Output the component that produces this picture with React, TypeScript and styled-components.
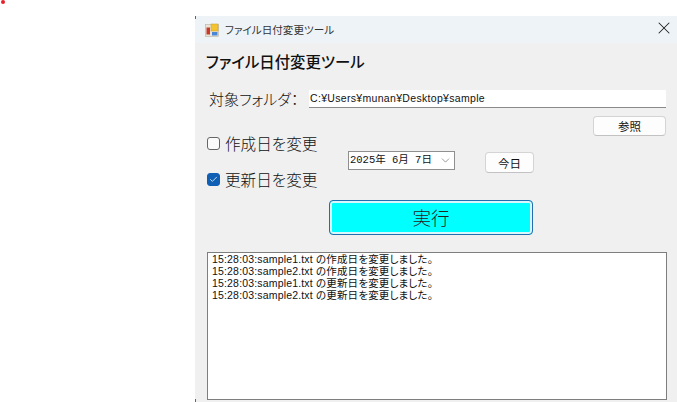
import React from "react";
import styled, { createGlobalStyle } from "styled-components";
import { X, ChevronDown, Check } from "lucide-react";

const GlobalStyle = createGlobalStyle`
  html, body {
    margin: 0;
    padding: 0;
    background: #ffffff;
  }
  body {
    font-family: "Liberation Sans", "Noto Sans CJK JP", sans-serif;
    font-feature-settings: "palt";
    color: #111;
  }
`;

const Page = styled.div`
  position: relative;
  width: 677px;
  height: 402px;
  overflow: hidden;
  padding: 16px 0 0 195px;
  box-sizing: border-box;
`;

const RedDot = styled.div`
  position: absolute;
  left: 1px;
  top: 0;
  width: 4px;
  height: 4px;
  border-radius: 50%;
  background: #e5202a;
`;

const EdgeTick = styled.div<{ $bottom?: boolean }>`
  position: absolute;
  left: 195px;
  ${(p) => (p.$bottom ? "bottom: 0;" : "top: 16px;")}
  width: 1px;
  height: 3px;
  background: #666;
`;

const Window = styled.div`
  display: flex;
  flex-direction: column;
  height: 386px;
  background: #f0f0f0;
`;

const TitleBar = styled.div`
  display: flex;
  align-items: center;
  flex-shrink: 0;
  height: 27px;
  padding: 0 3px 0 10px;
  background: #eef3f7;
  font-family: "Noto Sans CJK JP", sans-serif;
  font-size: 10.6px;
  color: #333;
`;

const AppIcon = styled.svg`
  width: 14px;
  height: 14px;
  margin-right: 6px;
`;

const TitleText = styled.span`
  flex: 1;
`;

const CloseIcon = styled(X)`
  width: 20px;
  height: 20px;
  margin-top: -3px;
  color: #222;
  stroke-width: 1.25;
`;

const Content = styled.div`
  display: flex;
  flex-direction: column;
  flex: 1;
  padding: 7px 11px 2px 12px;
`;

const Heading = styled.h1`
  margin: 0 0 18px -1px;
  font-family: "Noto Sans CJK JP", sans-serif;
  font-size: 15.4px;
  line-height: 22px;
  font-weight: 500;
  color: #111;
`;

const FolderRow = styled.div`
  display: flex;
  align-items: center;
  height: 18px;
  padding-left: 2px;
`;

const FolderLabel = styled.label`
  width: 100px;
  font-family: "Noto Sans CJK JP", sans-serif;
  font-size: 15px;
  font-weight: 300;
  line-height: 18px;
  white-space: nowrap;
`;

const PathInput = styled.div`
  flex: 1;
  height: 18px;
  padding-left: 1px;
  box-sizing: border-box;
  background: #fff;
  border-bottom: 1px solid #8a8a8a;
  font-size: 10.5px;
  line-height: 17px;
  letter-spacing: 0.32px;
`;

const BrowseRow = styled.div`
  display: flex;
  justify-content: flex-end;
  margin-top: 8px;
  height: 20px;
`;

const PushButton = styled.button<{ $w: number; $h: number }>`
  width: ${(p) => p.$w}px;
  height: ${(p) => p.$h}px;
  padding: 0;
  border: 1px solid #d4d4d4;
  border-bottom-color: #c2c2c2;
  border-radius: 4px;
  background: #fdfdfd;
  font-family: "Noto Sans CJK JP", sans-serif;
  font-size: 11.5px;
  color: #111;
`;

const OptionsRow = styled.div`
  display: flex;
  align-items: flex-start;
  height: 64px;
`;

const CheckColumn = styled.div`
  display: flex;
  flex-direction: column;
  gap: 14px;
  width: 141px;
  margin-top: -4px;
`;

const CheckRow = styled.div`
  display: flex;
  align-items: center;
  gap: 5px;
  height: 22px;
  font-family: "Noto Sans CJK JP", sans-serif;
  font-size: 15.6px;
  font-weight: 300;
`;

const Box = styled.span<{ $on?: boolean }>`
  display: flex;
  align-items: center;
  justify-content: center;
  width: 13px;
  height: 13px;
  box-sizing: border-box;
  border-radius: 3px;
  border: 1px solid ${(p) => (p.$on ? "#0f5fb5" : "#666")};
  background: ${(p) => (p.$on ? "#0f5fb5" : "#fbfbfb")};
  color: #fff;
`;

const DatePicker = styled.div`
  display: flex;
  align-items: center;
  justify-content: space-between;
  width: 107px;
  height: 19px;
  margin-top: 15px;
  padding: 0 2px 0 1px;
  box-sizing: border-box;
  background: #fff;
  border: 1px solid #8f8f8f;
  font-family: "Liberation Mono", "Noto Sans CJK JP", monospace;
  font-feature-settings: normal;
  font-size: 10.5px;
  line-height: 17px;
  white-space: pre;
`;

const TodaySlot = styled.div`
  margin: 16px 0 0 30px;
`;

const RunRow = styled.div`
  display: flex;
  margin: 0 0 0 122px;
`;

const RunButton = styled.button`
  width: 204px;
  height: 35px;
  padding: 0 0 2px;
  border: 1px solid #1f6fb0;
  border-radius: 4px;
  box-shadow: inset 0 0 0 2px #d8f6fb;
  background: #00ffff;
  font-family: "Noto Sans CJK JP", sans-serif;
  font-size: 18.5px;
  font-weight: 300;
  color: #222;
`;

const LogBox = styled.div`
  flex: 1;
  margin-top: 17px;
  width: 460px;
  box-sizing: border-box;
  padding: 0 4px;
  background: #fff;
  border: 1px solid #7e7e7e;
  font-size: 10.5px;
  line-height: 12px;
  letter-spacing: 0.17px;
  color: #111;
`;

const LogLine = styled.div`
  white-space: pre;
`;

const logs = [
  "15:28:03:sample1.txt の作成日を変更しました。",
  "15:28:03:sample2.txt の作成日を変更しました。",
  "15:28:03:sample1.txt の更新日を変更しました。",
  "15:28:03:sample2.txt の更新日を変更しました。",
];

export default function App() {
  return (
    <>
      <GlobalStyle />
      <Page>
        <RedDot />
        <EdgeTick />
        <EdgeTick $bottom />
        <Window>
          <TitleBar>
            <AppIcon viewBox="0 0 14 14">
              <rect x="0.5" y="1.5" width="13" height="12" fill="#e9e4d8" stroke="#b8b2a4" strokeWidth="0.6" />
              <rect x="6" y="1" width="7" height="7" fill="#f4c430" stroke="#c79a20" strokeWidth="0.5" />
              <rect x="1.5" y="4.5" width="3.5" height="7" fill="#c8392b" />
              <rect x="7" y="9" width="5.5" height="3.5" fill="#4a86d8" />
            </AppIcon>
            <TitleText>ファイル日付変更ツール</TitleText>
            <CloseIcon />
          </TitleBar>
          <Content>
            <Heading>ファイル日付変更ツール</Heading>
            <FolderRow>
              <FolderLabel>対象フォルダ：</FolderLabel>
              <PathInput>C:¥Users¥munan¥Desktop¥sample</PathInput>
            </FolderRow>
            <BrowseRow>
              <PushButton $w={73} $h={20}>参照</PushButton>
            </BrowseRow>
            <OptionsRow>
              <CheckColumn>
                <CheckRow>
                  <Box />
                  作成日を変更
                </CheckRow>
                <CheckRow>
                  <Box $on>
                    <Check size={9} strokeWidth={2} />
                  </Box>
                  更新日を変更
                </CheckRow>
              </CheckColumn>
              <DatePicker>
                <span>2025年 6月 7日</span>
                <ChevronDown size={13} strokeWidth={1} color="#444" />
              </DatePicker>
              <TodaySlot>
                <PushButton $w={49} $h={21}>今日</PushButton>
              </TodaySlot>
            </OptionsRow>
            <RunRow>
              <RunButton>実行</RunButton>
            </RunRow>
            <LogBox>
              {logs.map((line, i) => (
                <LogLine key={i}>{line}</LogLine>
              ))}
            </LogBox>
          </Content>
        </Window>
      </Page>
    </>
  );
}
